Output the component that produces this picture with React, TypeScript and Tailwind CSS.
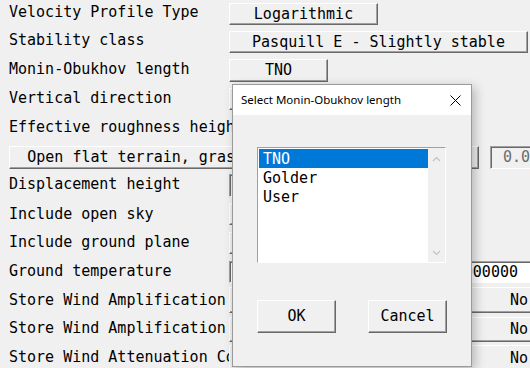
import type { ReactNode } from "react";

const raised =
  "relative flex items-center border border-t-white border-l-white border-b-[#696969] border-r-[#696969] bg-[#f0f0f0] shadow-[inset_-1px_-1px_#a0a0a0]";
const sunken =
  "relative flex items-center border border-t-[#a0a0a0] border-l-[#a0a0a0] border-b-white border-r-white shadow-[inset_1px_1px_#696969]";

interface RowProps {
  h: string;
  pt: string;
  label?: string;
  children?: ReactNode;
}

const Row = ({ h, pt, label, children }: RowProps) => (
  <div className={`flex ${h}`}>
    {label !== undefined && (
      <div className={`w-[229px] shrink-0 whitespace-nowrap pl-[9px] leading-[20px] ${pt}`}>{label}</div>
    )}
    {children}
  </div>
);

const Chevron = ({ up }: { up?: boolean }) => (
  <svg width="9" height="6" viewBox="0 0 9 6" className="mx-auto">
    <path d={up ? "M1 5 L4.5 1.5 L8 5" : "M1 1 L4.5 4.5 L8 1"} fill="none" stroke="#c2c2c2" strokeWidth="1.2" />
  </svg>
);

const MoninDialog = () => {
  const items = ["TNO", "Golder", "User"];
  return (
    <div className="absolute left-[232px] top-[84px] flex h-[283px] w-[240px] flex-col border border-[#9a9a9a] bg-[#f0f0f0] shadow-[3px_3px_10px_rgba(0,0,0,0.25)]">
      <div className="flex h-[30px] items-center justify-between bg-white pl-[8px] pr-[10px] font-['Noto_Sans',sans-serif] text-[11.5px] text-black">
        <span>Select Monin-Obukhov length</span>
        <svg width="11" height="11" viewBox="0 0 11 11">
          <path d="M0.5 0.5 L10.5 10.5 M10.5 0.5 L0.5 10.5" stroke="#000" strokeWidth="1" />
        </svg>
      </div>
      <div className={`${sunken} ml-[24px] mt-[32px] h-[116px] w-[189px] items-stretch`}>
        <div className="flex-1 bg-white pl-[1px] pt-[1px]">
          {items.map((item, i) => (
            <div
              key={item}
              className={`h-[19px] pl-[4px] leading-[21px] ${i === 0 ? "bg-[#0078d7] text-white" : "text-black"}`}
            >
              {item}
            </div>
          ))}
        </div>
        <div className="flex w-[17px] flex-col justify-between bg-[#f0f0f0] pb-[6px] pt-[8px]">
          <Chevron up />
          <Chevron />
        </div>
      </div>
      <div className="ml-[24px] mt-[37px] flex gap-[32px]">
        <div className={`${raised} h-[33px] w-[79px] justify-center`}>OK</div>
        <div className={`${raised} h-[33px] w-[79px] justify-center`}>Cancel</div>
      </div>
    </div>
  );
};

export default function App() {
  return (
    <div className="relative h-[368px] w-[530px] overflow-hidden bg-[#f0f0f0] font-['DejaVu_Sans_Mono',monospace] text-[15px] text-black">
      <Row h="h-[29px]" pt="pt-[2px]" label="Velocity Profile Type">
        <div className={`${raised} mt-[3px] h-[22px] w-[149px] shrink-0 justify-center`}>Logarithmic</div>
      </Row>
      <Row h="h-[29px]" pt="pt-[1px]" label="Stability class">
        <div className={`${raised} mt-[2px] h-[22px] w-[299px] shrink-0 justify-center`}>Pasquill E - Slightly stable</div>
      </Row>
      <Row h="h-[29px]" pt="pt-[1px]" label="Monin-Obukhov length">
        <div className={`${raised} mt-[1px] h-[23px] w-[99px] shrink-0 justify-center`}>TNO</div>
      </Row>
      <Row h="h-[29px]" pt="pt-[1px]" label="Vertical direction">
        <div className={`${raised} mt-[1px] h-[22px] w-[99px] shrink-0 justify-center`}>+Z</div>
      </Row>
      <Row h="h-[28px]" pt="pt-[1px]" label="Effective roughness height" />
      <Row h="h-[28px]" pt="">
        <div className={`${raised} ml-[9px] mt-[2px] h-[23px] w-[470px] shrink-0 justify-center`}>
          Open flat terrain, grass, few isolated obstacles
        </div>
        <div className={`${sunken} ml-[11px] mt-[2px] h-[23px] w-[80px] shrink-0 pl-[12px] text-[#6d6d6d]`}>0.03</div>
      </Row>
      <Row h="h-[29px]" pt="pt-[2px]" label="Displacement height">
        <div className={`${sunken} mt-[2px] h-[23px] w-[150px] shrink-0 pl-[4px]`}>0.0</div>
      </Row>
      <Row h="h-[29px]" pt="pt-[3px]" label="Include open sky">
        <div className={`${raised} mt-[2px] h-[22px] w-[99px] shrink-0 justify-center`}>Yes</div>
      </Row>
      <Row h="h-[29px]" pt="pt-[2px]" label="Include ground plane">
        <div className={`${raised} mt-[2px] h-[22px] w-[99px] shrink-0 justify-center`}>Yes</div>
      </Row>
      <Row h="h-[27px]" pt="pt-[2px]" label="Ground temperature">
        <div className={`${sunken} mt-[2px] h-[22px] w-[310px] shrink-0 justify-end bg-white pr-[20px]`}>15.000000000</div>
      </Row>
      <Row h="h-[29px]" pt="pt-[4px]" label="Store Wind Amplification Factors">
        <div className={`${raised} mt-[1px] h-[26px] w-[310px] shrink-0 justify-end pr-[10px]`}>No</div>
      </Row>
      <Row h="h-[29px]" pt="pt-[3px]" label="Store Wind Amplification Vectors">
        <div className={`${raised} mt-[2px] h-[25px] w-[310px] shrink-0 justify-end pr-[10px]`}>No</div>
      </Row>
      <Row h="h-[24px]" pt="pt-[3px]" label="Store Wind Attenuation Coefficients">
        <div className={`${raised} mt-[1px] h-[26px] w-[310px] shrink-0 justify-end pr-[10px]`}>No</div>
      </Row>
      <MoninDialog />
    </div>
  );
}
